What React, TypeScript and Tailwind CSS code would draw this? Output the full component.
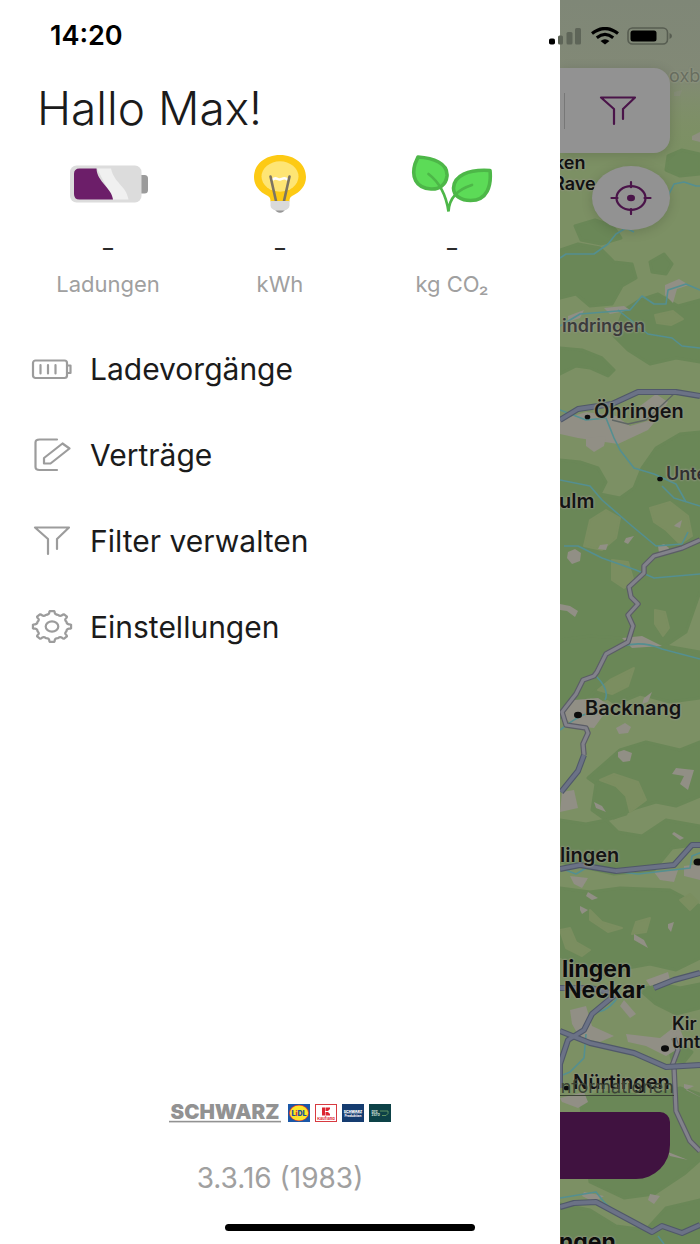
import React from "react";

const gearPath = (() => {
  const p = (deg: number, r: number) => {
    const a = (deg * Math.PI) / 180;
    return `${(21 + 19 * r * Math.cos(a)).toFixed(2)} ${(16.5 + 15.4 * r * Math.sin(a)).toFixed(2)}`;
  };
  let d = `M${p(-6, 1.01)}`;
  for (let k = 0; k < 8; k++) {
    const t = k * 45;
    d += ` L${p(t + 6, 1.01)} Q${p(t + 9, 0.98)} ${p(t + 9, 0.9)} Q${p(t + 12, 0.78)} ${p(t + 22.5, 0.82)} Q${p(t + 33, 0.78)} ${p(t + 36, 0.9)} Q${p(t + 36, 0.98)} ${p(t + 39, 1.01)}`;
  }
  return d + "Z";
})();

const FunnelIcon = ({ className }: { className: string }) => (
  <svg viewBox="0 0 42 34" className={className} fill="none" stroke="currentColor" strokeWidth="2.200" strokeLinecap="round" strokeLinejoin="round" aria-hidden="true">
    <path d="M17 30V15L4 3.500h34L26 15V25" />
  </svg>
);

const BatteryIcon = () => (
  <svg viewBox="0 0 42 34" className="h-[34px] w-[42px]" fill="none" stroke="currentColor" strokeWidth="2.200" strokeLinecap="round" strokeLinejoin="round" aria-hidden="true">
    <rect x="2" y="8.500" width="34" height="17.500" rx="2.500" />
    <path d="M9.500 13v8.500M17 13v8.500M24.500 13v8.500M36 13.500h3.500v7.500H36" />
  </svg>
);

const EditIcon = () => (
  <svg viewBox="0 0 42 34" className="h-[34px] w-[42px]" fill="none" stroke="currentColor" strokeWidth="2.200" strokeLinecap="round" strokeLinejoin="round" aria-hidden="true">
    <path d="M26 1.500H8.500Q4.500 1.500 4.500 4.500v24.500q0 3 4 3H26" />
    <path d="M13 25.500v-5.500L31.500 5.500l7 5L19.500 25.500Z" />
  </svg>
);

const GearIcon = () => (
  <svg viewBox="0 0 42 34" className="h-[34px] w-[42px]" fill="none" stroke="currentColor" strokeWidth="2.200" strokeLinejoin="round" aria-hidden="true">
    <path d={gearPath} />
    <ellipse cx="21" cy="16.500" rx="6.300" ry="5.200" />
  </svg>
);

const BatteryArt = () => (
  <svg viewBox="-2 0 80 38" className="h-[38px] w-20" aria-hidden="true">
    <rect x="67" y="10" width="11" height="18.500" rx="3.500" fill="#9b9b9b" />
    <rect x="0" y="0.500" width="71.500" height="37" rx="6.500" fill="#dcdcdc" />
    <path d="M27 3.500H41C44.500 19 56 20 58.500 34.500H43Z" fill="#f0f0f0" />
    <path d="M9.500 3.500H26.500C27 17 42 23 43 34.500H9.500Q4 34.500 4 29V9Q4 3.500 9.500 3.500Z" fill="#6c1e69" />
  </svg>
);

const BulbArt = () => (
  <svg viewBox="0 0 54 60" className="h-[60px] w-[54px]" aria-hidden="true">
    <path d="M27 1C12 1 1 10.500 1 23c0 9 6 15 13 18.500 3 1.500 3.500 3 3.500 6h19c0-3 .5-4.500 3.500-6C47 38 53 32 53 23 53 10.500 42 1 27 1Z" fill="#fdca14" />
    <ellipse cx="27" cy="22.500" rx="18.500" ry="15.200" fill="#fee574" />
    <path d="M19.500 26c3-4 5 0 7.500-.5s5-3 7.500.5" stroke="#fff" strokeWidth="2.500" fill="none" />
    <path d="M17.500 22.500 23 47M36.500 22.500 31 47" stroke="#7d7562" strokeWidth="2.600" strokeLinecap="round" />
    <path d="M22 55h10c-1 5-9 5-10 0Z" fill="#969696" />
    <path d="M17.500 47h19v4.500q0 3.500-5.500 5h-8q-5.500-1.500-5.500-5Z" fill="#dadada" />
  </svg>
);

const LeafArt = () => (
  <svg viewBox="0 0 82 60" className="h-[60px] w-[82px]" fill="none" strokeLinecap="round" aria-hidden="true">
    <path d="M7 3C22 4 37 9 36 22c-1 9-8 13.500-16 13C4 34 .5 22 4 10Z" fill="#5cdb57" stroke="#4db748" strokeWidth="3.600" strokeLinejoin="round" />
    <path d="M79 16.500C57 15 43 22 42.500 34c0 8 8 12.500 17 12.500 17 0 21-15 19.500-30Z" fill="#5cdb57" stroke="#4db748" strokeWidth="3.600" strokeLinejoin="round" />
    <path d="M17.500 20C28 28 35 40 37.500 57.500C38 46 45 36 61 31" stroke="#4db748" strokeWidth="2.700" />
  </svg>
);

const stats = [
  { label: "Ladungen", art: <BatteryArt /> },
  { label: "kWh", art: <BulbArt /> },
  { label: "kg CO₂", art: <LeafArt /> },
];

const menu = [
  { label: "Ladevorgänge", icon: <BatteryIcon /> },
  { label: "Verträge", icon: <EditIcon /> },
  { label: "Filter verwalten", icon: <FunnelIcon className="h-[34px] w-[42px]" /> },
  { label: "Einstellungen", icon: <GearIcon /> },
];

const forests = [
  "M560 250l18-6 22 4 14 14 18 2 4 14-14 8-10 18-22 2-14-12-16 4Z",
  "M650 262l14-8 8 10-6 10-14-2Z",
  "M640 300l18-6 20 12 22-6v62l-24-4-26 6-22-14-14-14 10-26Z",
  "M560 348l22 2 20 8 12 12-6 6-18-8-14-2-16 8Z",
  "M668 156l14-6 18 4v20l-20 2-14-6Z",
  "M575 226l20-6 18 6 8 12-20 6-20-4Z",
  "M560 460l20 2 18 6 8 14-6 12 20 4 14-10 8-20 14-20 24-14 20-2v160l-14 40-30 20-20 14-16 30-20 4-20-8-20 4Z",
  "M560 640l30-4 30 2 80 14v46l-30 4-30-8-24 10-20-14-18 20-18 8Z",
  "M620 750l26-8 34 8 20-8v54l-24 10-20-4-20 6-22 10-14-10 8-16-20-14Z",
  "M596 784l20-6 14 16-4 20-20 6-14-10Z",
  "M560 820l26 4 20-4 12 12 24 4 24-16 34 6v18l-28 4-18 22-40 4-54-12Z",
  "M560 888l30 4 30-4 50 2 30 16v52l-24 12-26-6-22 4-20 8-26-10-22-10Z",
  "M640 990l20-6 20 4 20-4v24l-24 6-20-10Z",
  "M580 1098l30-6 40 4 30-8 20 6v66l-16 14-30 20-30 4-34-16Z",
  "M560 1204l30 6 26 16 30 4 20-22 34-8v44H560Z",
  "M670 1050l10-6 12 8-8 10-12-2Z",
];
const clearings = [
  "M590 520l16-10 14 8-4 20-14 12-18-4Z",
  "M650 508l20-6 18 14 4 20-12 8-14-14-12-8Z",
  "M612 560l16 2 6 20-10 6-12-8Z",
  "M655 610l10 2 4 16-6 8-8-12Z",
  "M610 680l24-12-6 18-16 8-14-4Z",
  "M600 780l14-6 24 8 8 18-16 12-4-16-10-10Z",
  "M590 910l12 12 20 6-14 4-18-12Z",
  "M636 922l14-4-4 14-14 2Z",
  "M680 900l10-6 8 8-8 8Z",
  "M655 315l18-4 10 8-12 6-14-2Z",
  "M560 930l10-2 6 14 14 8-8 6-16-8Z",
  "M610 1128l30-6 20 8-20 10-24 2Z",
];
const towns = [
  "M560 420l26-8 30 4 14 10 28-8-10 12-30 14-40-6-18-4Z",
  "M640 406l16-12 12 8-10 16-18 2Z",
  "M586 438l20-2-2 10-10 6-8-6Z",
  "M665 285l14-6 10 6-12 4-4 14-8-8Z",
  "M604 308l20-2 6 4-20 4Z",
  "M568 316l16-6-4 8-12 4Z",
  "M568 552l7-3 6 4-1 8-8 3-5-6Z",
  "M658 546l6-2 5 4-2 6-8-1Z",
  "M626 538l8-2-6 8-4-2Z",
  "M600 545l8-1-2 6-8-1Z",
  "M560 604l10 2 8 5-3 6-8-6-7-1Z",
  "M676 524l6-4-2 8-6-2Z",
  "M622 638l20-2 20 10-30 2Z",
  "M560 714l14-14 24-2 12 8-16 22-20-2Z",
  "M616 728l9-5 6 4-3 6-9 1Z",
  "M644 698l8-6-4 10-6 2Z",
  "M618 752l6-2 8 3-2 8-7 1-5-5Z",
  "M676 768l18 2-6 20-8-6 4-8-12-2Z",
  "M562 792l12-2 4 18-18 4Z",
  "M594 802l8 4 4 6-10-4Z",
  "M654 872l24-2-4 12-14-2Z",
  "M674 832l10 6-4 2-8-6Z",
  "M570 876l18 2-6 10-8-4Z",
  "M588 892l10 6-6 2-6-4Z",
  "M580 906l8 4-6 4-2-4Z",
  "M634 934l10 6 4 8-14-8Z",
  "M668 924l6-2-3 10-3-4Z",
  "M684 866l16-2v16l-16-4Z",
  "M570 1010l16-4 6 20 22 10-14 6-20-4-8-14Z",
  "M624 1000l12 14-6 4-10-12Z",
  "M626 1034l34 4 18-14 8 20-20 12-20-10-18-4Z",
  "M646 980l22-8 2 8-20 6Z",
  "M560 1098l24-6 4 10-10 6-16-6Z",
  "M684 1084l10 2-8 4 20 10-22-12Z",
  "M668 1152l20 8-18-4Z",
  "M650 1194l10 2-6 8-6-4Z",
  "M584 1192l20 4-10 6-12-6Z",
  "M674 92l8-2-2 6-6 0Z",
  "M692 136l8-4v10l-8-2Z",
];
const rivers = [
  "M560 258l6-4h28l14-10 8-10 10-6 8 4",
  "M668 196l6-12 10-2 12 4h4",
  "M560 326l20-12 50-4 12-14 12 8h12l2-14 18-6 14 6",
  "M618 310l30 24 24 4 10 8 18 2",
  "M560 410l26 10 20-2 8 20 6 12 14 18 20 6 22 10 10 18",
  "M560 480l30 6 12 14 30 26 24 20 26-2 6-12",
  "M564 546h14l24 12 34 12 18 8 46-4",
  "M662 486l12 12 26 8",
  "M602 656q30-20 60-7l38 10",
  "M596 676q14 14 9 24M560 730q18-14 26-16",
  "M560 868l16 6 10-6 52 6 52-6 2-12 10-4",
  "M620 994q-10 16-22 18",
  "M586 1034l-2 24-14 14-10 4",
  "M560 1198l36-6 8 10 18 16M658 1236l6 8",
];
const highways = [
  "M560 420l18-11 34-5 26-12h38l24 4",
  "M561 792l17-21 6-16",
  "M560 869l20-4 36 6 58-6 18-20h8",
  "M560 988h30l26 6M654 988l20-8 26-7",
  "M616 994l-24 20-8 16-16 10-8 24v24",
  "M560 1031l30 12 44 10 32 14 34-2",
  "M560 1207l14-4 22-1 56 30 10-6 20 7 18-8",
];
const minorRoads = [
  "M700 540L682 548L654 556L644 566V573L629 587L631 597L638 604L628 615L633 626L628 642L606 654L597 672L594 676L583 680L576 694L562 712L566 725L586 728L588 733L583 744L584 755",
  "M674 1067l2 44 14 30 10 10M672 1066l6-16-4-12",
];

const MapArt = () => (
  <svg viewBox="560 0 140 1244" preserveAspectRatio="xMinYMin slice" className="absolute inset-0 h-full w-full" fill="none" strokeLinejoin="round" aria-hidden="true">
    <defs>
      <linearGradient id="sky" x1="0" y1="0" x2="0" y2="1">
        <stop offset="0" stopColor="#7f8777" />
        <stop offset="0.500" stopColor="#828976" />
        <stop offset="1" stopColor="#7f9165" stopOpacity="0" />
      </linearGradient>
    </defs>
    <rect x="560" width="140" height="1244" fill="#7c9064" />
    {forests.map((d) => <path key={d} d={d} fill="#6a8757" stroke="#6a8757" strokeWidth="3" />)}
    {clearings.map((d) => <path key={d} d={d} fill="#7b8e60" stroke="#7b8e60" strokeWidth="2" />)}
    {towns.map((d) => <path key={d} d={d} fill="#918f85" />)}
    {rivers.map((d) => <path key={d} d={d} stroke="#548f91" strokeWidth="1.600" />)}
    <path d="M612 420l16 4 18-4 30-28" stroke="#5f6664" strokeWidth="1.300" />
    {minorRoads.map((d) => <path key={d} d={d} stroke="#5b5d66" strokeWidth="5.500" />)}
    {minorRoads.map((d) => <path key={d} d={d} stroke="#82828b" strokeWidth="3.200" />)}
    {highways.map((d) => <path key={d} d={d} stroke="#50586a" strokeWidth="6" />)}
    {highways.map((d) => <path key={d} d={d} stroke="#6b7286" strokeWidth="3.800" />)}
    <g fill="#0c0c0c">
      <ellipse cx="587.500" cy="417" rx="2.800" ry="2.300" />
      <ellipse cx="660" cy="479" rx="2.800" ry="2.300" />
      <ellipse cx="578" cy="715" rx="4" ry="3.200" />
      <ellipse cx="698" cy="862" rx="4.500" ry="3.500" />
      <ellipse cx="665" cy="1048.500" rx="4" ry="3.200" />
      <ellipse cx="566.500" cy="1088" rx="2.800" ry="2.300" />
    </g>
    <rect x="560" width="140" height="150" fill="url(#sky)" />
  </svg>
);

const labels = [
  { text: "oxb", place: "left-[109px] top-[64px] text-lg font-normal text-[#686e60]" },
  { text: "ken", place: "left-[-6px] top-[151px] text-lg font-semibold text-[#111]" },
  { text: "Rave", place: "left-[-7px] top-[172px] text-lg font-semibold text-[#111]" },
  { text: "indringen", place: "left-[2px] top-[314px] text-lg font-semibold text-[#3b3b3b]" },
  { text: "Öhringen", place: "left-[34px] top-[399px] text-xl font-semibold text-[#141414]" },
  { text: "Unte", place: "left-[106px] top-[462px] text-lg font-semibold text-[#303030]" },
  { text: "ulm", place: "left-[-1px] top-[489px] text-xl font-semibold text-[#141414]" },
  { text: "Backnang", place: "left-[25px] top-[696px] text-xl font-semibold text-[#141414]" },
  { text: "lingen", place: "left-[0px] top-[843px] text-xl font-semibold text-[#141414]" },
  { text: "lingen", place: "left-[2px] top-[957px] text-[23px] font-bold text-[#0c0c0c]" },
  { text: "Neckar", place: "left-[4px] top-[978px] text-[23px] font-bold text-[#0c0c0c]" },
  { text: "Kir", place: "left-[112px] top-[1012px] text-lg font-semibold text-[#141414]" },
  { text: "unte", place: "left-[112px] top-[1030px] text-lg font-semibold text-[#141414]" },
  { text: "Nürtingen", place: "left-[13px] top-[1070px] text-xl font-semibold text-[#141414]" },
  { text: "ngen", place: "left-[-1px] top-[1230px] text-[23px] font-bold text-[#0c0c0c]" },
];

const StatusBar = () => (
  <header className="pointer-events-none absolute inset-x-0 top-0 z-20 flex h-[71px] items-center justify-between pr-[27px] pl-[50px]">
    <time className="text-[27px] leading-7 font-semibold text-black">14:20</time>
    <div className="flex items-center gap-2">
      <svg viewBox="0 0 34 18" className="h-[18px] w-[34px]" aria-hidden="true">
        <rect x="0" y="11.500" width="6" height="6" rx="1.800" fill="#000" />
        <g fill="#5e6558">
          <rect x="9" y="8.500" width="5" height="9" rx="1.500" />
          <rect x="17.500" y="5" width="6" height="12.500" rx="1.500" />
          <rect x="26" y="1" width="6" height="16.500" rx="1.500" />
        </g>
      </svg>
      <svg viewBox="0 0 28 18" className="h-[18px] w-7" fill="none" stroke="#000" strokeWidth="3.200" aria-hidden="true">
        <path d="M1 6.500Q14-3.500 27 6.500M5.800 10.700Q14 4.200 22.200 10.700" />
        <path d="M9.500 14Q14 10.500 18.500 14L14 17.500Z" fill="#000" stroke="none" />
      </svg>
      <svg viewBox="0 0 46 18" className="h-[18px] w-[46px]" aria-hidden="true">
        <rect x="1" y="1" width="39.500" height="16" rx="4.500" fill="none" stroke="#575d51" strokeWidth="1.600" />
        <rect x="3.500" y="3.500" width="26" height="11" rx="2.500" fill="#000" />
        <path d="M42.500 6q2.500 1 2.500 3t-2.500 3Z" fill="#575d51" />
      </svg>
    </div>
  </header>
);

const Brands = () => (
  <div className="flex items-start gap-[5px]">
    <svg viewBox="0 0 114 20" className="h-5 w-[114px] overflow-visible" role="img" aria-label="Schwarz">
      <text x="56" y="14.500" textAnchor="middle" fontFamily="Inter, sans-serif" fontWeight="900" fontSize="20.500" fill="#929292">SCHWARZ</text>
      <rect y="16.800" width="112" height="1.600" fill="#929292" />
    </svg>
    <svg viewBox="0 0 22 18" className="h-[18px] w-[22px]" role="img" aria-label="Lidl">
      <rect width="22" height="18" fill="#1a58a8" />
      <ellipse cx="11" cy="9" rx="10" ry="8.200" fill="#e33b2d" />
      <ellipse cx="11" cy="9" rx="9.200" ry="7.500" fill="#fbe62a" />
      <text x="11" y="11.500" textAnchor="middle" fontFamily="Inter, sans-serif" fontWeight="900" fontSize="7" fill="#1b529c">L<tspan fill="#e33b2d">i</tspan>DL</text>
    </svg>
    <svg viewBox="0 0 22 18" className="h-[18px] w-[22px]" role="img" aria-label="Kaufland">
      <rect x="0.500" y="0.500" width="21" height="17" fill="#fff" stroke="#d83a40" />
      <path d="M7 3.500h3v8H7ZM10.500 3.500H15v1.500l-2 2h-2.500ZM10.500 8H13l2 2v1.500h-4.500Z" fill="#dc2530" />
      <text x="11" y="15.500" textAnchor="middle" fontFamily="Inter, sans-serif" fontWeight="700" fontSize="4" fill="#dc2530">Kaufland</text>
    </svg>
    <svg viewBox="0 0 22 18" className="h-[18px] w-[22px]" role="img" aria-label="Schwarz Produktion">
      <rect width="22" height="18" fill="#153c70" />
      <text x="11" y="8.500" textAnchor="middle" fontFamily="Inter, sans-serif" fontWeight="900" fontSize="3.500" fill="#fff">SCHWARZ</text>
      <path d="M2 9.300h18" stroke="#b6c4d6" strokeWidth="0.500" />
      <text x="11" y="12.500" textAnchor="middle" fontFamily="Inter, sans-serif" fontWeight="700" fontSize="3.200" fill="#fff">Produktion</text>
    </svg>
    <svg viewBox="0 0 22 18" className="h-[18px] w-[22px]" role="img" aria-label="PreZero">
      <rect width="22" height="18" fill="#0d4247" />
      <text x="2.500" y="8.800" fontFamily="Inter, sans-serif" fontWeight="600" fontSize="4" fill="#d3e0df">pre</text>
      <text x="2.500" y="12.300" fontFamily="Inter, sans-serif" fontWeight="600" fontSize="4" fill="#d3e0df">zero</text>
      <path d="M11 7h8v2.500l-2 2h-4" fill="none" stroke="#669b65" strokeWidth="0.900" />
    </svg>
  </div>
);

export default function App() {
  return (
    <div className="relative flex min-h-screen overflow-hidden bg-white font-['Inter','Liberation_Sans',sans-serif]">
      <StatusBar />

      <aside className="flex w-4/5 flex-col bg-white pt-20">
        <h1 className="pl-[37px] text-[46px] leading-[56px] font-light text-[#1b1b1b]">Hallo Max!</h1>

        <section className="mt-[18px] grid grid-cols-3 px-[22px]" aria-label="Statistik">
          {stats.map((s) => (
            <div key={s.label} className="flex flex-col items-center">
              <div className="flex h-[60px] items-center">{s.art}</div>
              <strong className="mt-[18px] text-xl leading-8 font-semibold text-[#2b2b2b]">–</strong>
              <span className="mt-2 text-[22px] leading-6 text-[#a0a0a0]">{s.label}</span>
            </div>
          ))}
        </section>

        <nav className="mt-[30px] flex flex-col">
          {menu.map((m) => (
            <a key={m.label} href="#" className="flex h-[86px] items-center gap-[17px] pl-[31px] text-[30px] leading-9 text-[#1b1b1b]">
              <span className="text-[#9c9c9c]">{m.icon}</span>
              {m.label}
            </a>
          ))}
        </nav>

        <footer className="mt-auto flex flex-col items-center pb-[50px]">
          <Brands />
          <p className="mt-[38px] text-[28px] leading-8 text-[#a0a0a0]">3.3.16 (1983)</p>
        </footer>
      </aside>

      <main className="relative flex flex-1 flex-col overflow-hidden bg-[#7d9164] pt-[68px] pr-[30px]">
        <MapArt />
        {labels.map((l) => (
          <span key={l.place} className={`absolute leading-6 whitespace-nowrap [text-shadow:0_0_2px_#929784,0_0_2px_#929784,0_0_3px_#929784] ${l.place}`}>
            {l.text}
          </span>
        ))}
        <div className="relative flex h-[85px] items-center rounded-r-2xl bg-[#929292] shadow-[0_2px_12px_rgba(0,0,0,0.15)]">
          <span className="ml-1 h-9 w-px bg-[#777]" />
          <button type="button" aria-label="Filter" className="flex flex-1 justify-center text-[#4a1449]">
            <FunnelIcon className="h-[34px] w-[42px]" />
          </button>
        </div>
        <button type="button" aria-label="Standort" className="relative mt-[13px] flex h-16 w-[78px] items-center justify-center self-end rounded-[50%] bg-[#929292] shadow-[0_2px_12px_rgba(0,0,0,0.15)]">
          <svg viewBox="0 0 42 34" className="h-[34px] w-[42px]" fill="none" stroke="#4a1449" strokeWidth="2.200" strokeLinecap="round" aria-hidden="true">
            <ellipse cx="21" cy="17" rx="14.500" ry="11.800" />
            <path d="M21 1.200v5M21 28v5M1.500 17h6M34.500 17h6" />
            <ellipse cx="21" cy="17" rx="4" ry="3.300" fill="#4a1449" stroke="none" />
          </svg>
        </button>
        <div className="relative mt-auto flex flex-col pb-[65px]">
          <a href="#" className="-mr-1 flex justify-end border-b border-[#3b4335] text-lg leading-4 whitespace-nowrap text-[#3b4335]">Informationen</a>
          <button type="button" aria-label="Laden starten" className="mt-4 h-[67px] rounded-tr-[10px] rounded-br-[34px] bg-[#401240]" />
        </div>
      </main>

      <div className="absolute bottom-[13px] left-1/2 z-20 h-[7px] w-[250px] -translate-x-1/2 rounded-full bg-black" />
    </div>
  );
}
